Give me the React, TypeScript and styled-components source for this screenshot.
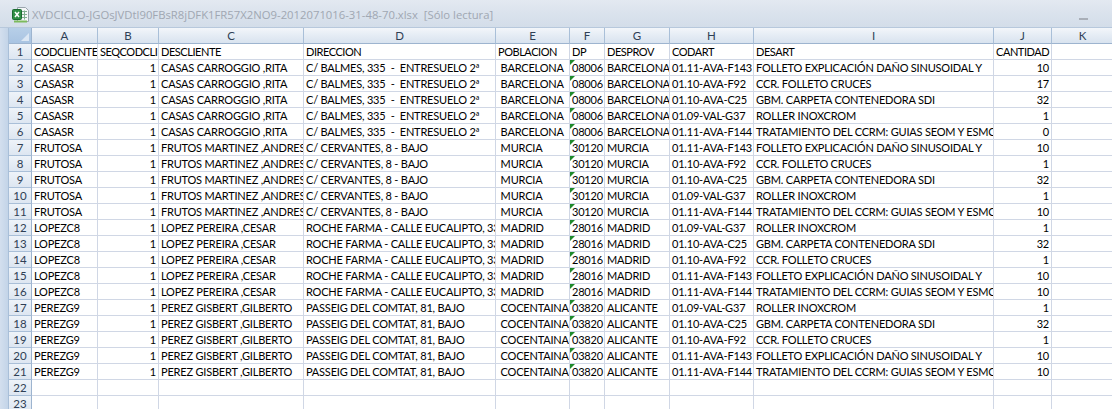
import * as React from 'react';
import styled, { createGlobalStyle } from 'styled-components';

const GlobalStyle = createGlobalStyle`
  html, body {
    margin: 0;
    padding: 0;
    background: #fff;
    overflow: hidden;
  }
`;

const COLUMN_WIDTHS = [66, 61, 145, 192, 74, 35, 65, 84, 240, 58, 62];
const COLUMNS = 'ABCDEFGHIJK'.split('');
const HEADERS = ['CODCLIENTE', 'SEQCODCLI', 'DESCLIENTE', 'DIRECCION', 'POBLACION', 'DP', 'DESPROV', 'CODART', 'DESART', 'CANTIDAD', ''];

const ARTICLES = {
  F143: ['01.11-AVA-F143', 'FOLLETO EXPLICACIÓN DAÑO SINUSOIDAL Y'],
  F92: ['01.10-AVA-F92', 'CCR. FOLLETO CRUCES'],
  C25: ['01.10-AVA-C25', 'GBM. CARPETA CONTENEDORA SDI'],
  G37: ['01.09-VAL-G37', 'ROLLER INOXCROM'],
  F144: ['01.11-AVA-F144', 'TRATAMIENTO DEL CCRM: GUIAS SEOM Y ESMO'],
};

type ArticleKey = keyof typeof ARTICLES;

const CASAS = ['CASASR', 'CASAS CARROGGIO ,RITA', 'C/ BALMES, 335  -  ENTRESUELO 2ª', ' BARCELONA', '08006', 'BARCELONA'];
const FRUTOS = ['FRUTOSA', 'FRUTOS MARTINEZ ,ANDRES', 'C/ CERVANTES, 8 - BAJO', ' MURCIA', '30120', 'MURCIA'];
const LOPEZ = ['LOPEZC8', 'LOPEZ PEREIRA ,CESAR', 'ROCHE FARMA - CALLE EUCALIPTO, 33', ' MADRID', '28016', 'MADRID'];
const PEREZ = ['PEREZG9', 'PEREZ GISBERT ,GILBERTO', 'PASSEIG DEL COMTAT, 81, BAJO', ' COCENTAINA', '03820', 'ALICANTE'];

const ROWS: [string[], ArticleKey, number][] = [
  [CASAS, 'F143', 10],
  [CASAS, 'F92', 17],
  [CASAS, 'C25', 32],
  [CASAS, 'G37', 1],
  [CASAS, 'F144', 0],
  [FRUTOS, 'F143', 10],
  [FRUTOS, 'F92', 1],
  [FRUTOS, 'C25', 32],
  [FRUTOS, 'G37', 1],
  [FRUTOS, 'F144', 10],
  [LOPEZ, 'G37', 1],
  [LOPEZ, 'C25', 32],
  [LOPEZ, 'F92', 1],
  [LOPEZ, 'F143', 10],
  [LOPEZ, 'F144', 10],
  [PEREZ, 'G37', 1],
  [PEREZ, 'C25', 32],
  [PEREZ, 'F92', 1],
  [PEREZ, 'F143', 10],
  [PEREZ, 'F144', 10],
];

const Window = styled.div`
  display: flex;
  flex-direction: column;
  width: 1112px;
  height: 409px;
  overflow: hidden;
  background: #fff;
`;

const TitleBar = styled.div`
  display: flex;
  align-items: center;
  flex: 0 0 28px;
  height: 28px;
  box-sizing: border-box;
  padding: 3px 24px 0 12px;
  background: linear-gradient(#e3e9f1, #dbe3ed 45%, #d3dde9);
  border-bottom: 1px solid #b7c8dc;
`;

const FileIcon = styled.svg`
  flex: none;
  width: 17px;
  height: 17px;
  margin-right: 3px;
`;

const Title = styled.span`
  flex: 1;
  font: 11.3px/20px 'Open Sans', sans-serif;
  color: #a0a7b2;
  white-space: pre;
`;

const Minimize = styled.span`
  width: 9px;
  height: 2px;
  margin-top: 8px;
  background: #a9afb8;
`;

const Sheet = styled.div`
  display: flex;
  flex: 1;
  min-height: 0;
`;

const LeftStrip = styled.div`
  flex: 0 0 9px;
  background: linear-gradient(90deg, #d3dfee, #c3d4e8);
  border-right: 1px solid #a9bfd8;
  box-sizing: border-box;
`;

const Grid = styled.div`
  flex: 1;
  min-width: 0;
`;

const Row = styled.div`
  display: flex;
  height: 16px;
`;

const Corner = styled.div`
  position: relative;
  flex: 0 0 23px;
  box-sizing: border-box;
  background: linear-gradient(#b7cfe8, #a9c4e2);
  border-right: 1px solid #9db4cf;
  border-bottom: 1px solid #9db4cf;

  &::after {
    content: '';
    position: absolute;
    right: 2px;
    bottom: 2px;
    border-style: solid;
    border-width: 0 0 8px 8px;
    border-color: transparent transparent #dbe7f4 transparent;
  }
`;

const ColumnHead = styled.div`
  box-sizing: border-box;
  flex: none;
  text-align: center;
  font: 11.5px/15px Lato, 'Liberation Sans', sans-serif;
  color: #2f3f55;
  background: linear-gradient(#f3f6fa, #e6edf5 45%, #d9e3ef);
  border-right: 1px solid #a9bfd8;
  border-bottom: 1px solid #9db4cf;
`;

const RowHead = styled.div`
  box-sizing: border-box;
  flex: 0 0 23px;
  text-align: center;
  font: 11.5px/16px Lato, 'Liberation Sans', sans-serif;
  color: #2f3f55;
  background: linear-gradient(#eef3f9, #dde6f1);
  border-right: 1px solid #9db4cf;
  border-bottom: 1px solid #a9bfd8;
`;

const Cell = styled.div<{ $right?: boolean; $tight?: boolean }>`
  position: relative;
  box-sizing: border-box;
  flex: none;
  padding: 0 ${p => (p.$right ? 2 : 0)}px 0 2px;
  overflow: hidden;
  white-space: pre;
  text-align: ${p => (p.$right ? 'right' : 'left')};
  font: 11px/16px Lato, 'Liberation Sans', sans-serif;
  letter-spacing: ${p => (p.$tight ? -0.45 : -0.2)}px;
  color: #000;
  background: #fff;
  border-right: 1px solid #d0d7e5;
  border-bottom: 1px solid #d0d7e5;
`;

const ErrorMark = styled.span`
  position: absolute;
  left: 0;
  top: 0;
  border-style: solid;
  border-width: 5px 5px 0 0;
  border-color: #1f8a2c transparent transparent transparent;
`;

const ExcelIcon = () => (
  <FileIcon viewBox="0 0 17 17">
    <path d="M5.5.5h8l3 3v11h-11z" fill="#f4f6f8" stroke="#9aa5ad" />
    <path d="M10 4.5h5M10 7.5h5M10 10.5h5M12.5 3.5v9" stroke="#7fae8e" strokeWidth="1" />
    <rect x="0.5" y="2.5" width="9" height="10" rx="1" fill="#2f8f45" stroke="#1c6b31" />
    <path d="M3 5l4 5M7 5l-4 5" stroke="#fff" strokeWidth="1.5" />
    <path d="M2 14.5h13" stroke="#7dbb5c" strokeWidth="2" />
  </FileIcon>
);

const DataRow = ({ num, values }: { num: number; values: (string | number)[] }) => (
  <Row>
    <RowHead>{num}</RowHead>
    {COLUMN_WIDTHS.map((w, i) => {
      const value = values[i];
      const isNumber = typeof value === 'number';
      return (
        <Cell key={i} $right={isNumber} $tight={num === 1} style={{ width: w }}>
          {i === 5 && num > 1 && value !== '' && <ErrorMark />}
          {value}
        </Cell>
      );
    })}
  </Row>
);

export default function App() {
  return (
    <>
      <GlobalStyle />
      <Window>
        <TitleBar>
          <ExcelIcon />
          <Title>XVDCICLO-JGOsJVDtl90FBsR8jDFK1FR57X2NO9-2012071016-31-48-70.xlsx  [Sólo lectura]</Title>
          <Minimize />
        </TitleBar>
        <Sheet>
          <LeftStrip />
          <Grid>
            <Row>
              <Corner />
              {COLUMNS.map((c, i) => (
                <ColumnHead key={c} style={{ width: COLUMN_WIDTHS[i] }}>
                  {c}
                </ColumnHead>
              ))}
            </Row>
            <DataRow num={1} values={HEADERS} />
            {ROWS.map(([client, key, qty], i) => {
              const [code, name, address, town, zip, province] = client;
              const [articleCode, article] = ARTICLES[key];
              return (
                <DataRow
                  key={i}
                  num={i + 2}
                  values={[code, 1, name, address, town, zip, province, articleCode, article, qty, '']}
                />
              );
            })}
            <DataRow num={22} values={Array(11).fill('')} />
            <DataRow num={23} values={Array(11).fill('')} />
          </Grid>
        </Sheet>
      </Window>
    </>
  );
}
